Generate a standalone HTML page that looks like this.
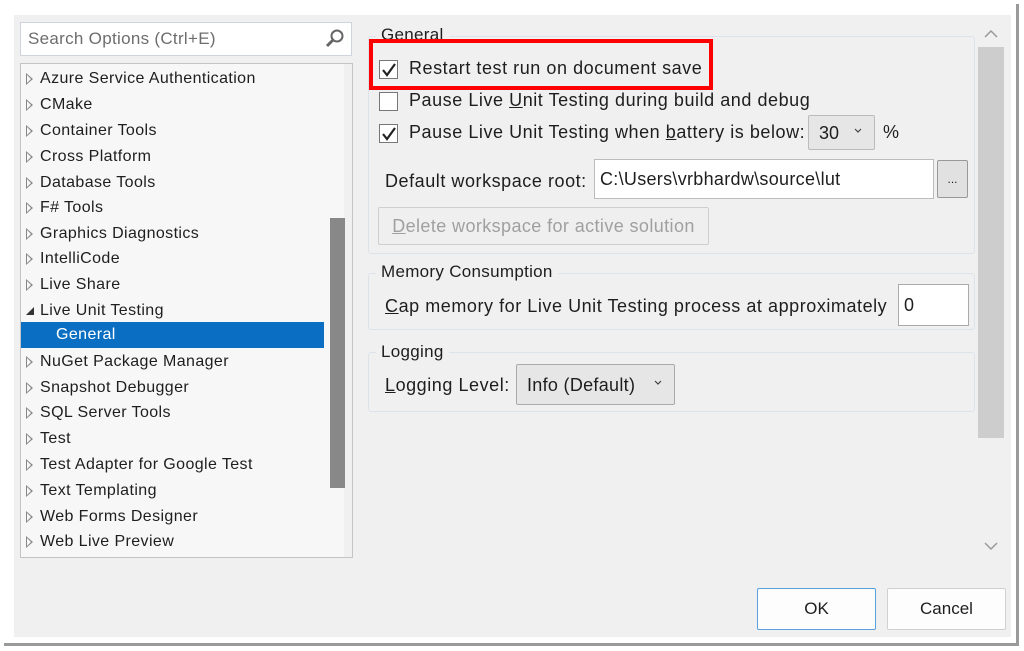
<!DOCTYPE html>
<html><head><meta charset="utf-8"><style>
*{box-sizing:border-box;margin:0;padding:0}
body{width:1024px;height:651px;background:#fff;position:relative;overflow:hidden;font-family:"Liberation Sans",sans-serif;color:#1e1e1e;font-size:16px}
.a{position:absolute}
.bg{left:14px;top:15px;width:997px;height:622px;background:#f0f0f0}
.shr{left:1016px;top:4px;width:3px;height:642px;background:#9a9a9a}
.shb{left:4px;top:643px;width:1015px;height:3px;background:#9a9a9a}
.search{left:20px;top:22px;width:332px;height:34px;background:#fff;border:1px solid #cfd3dc;color:#6d6d6d;font-size:17px;letter-spacing:.3px;padding:6px 0 0 7px}
.tree{left:20px;top:63px;width:333px;height:495px;background:#f7f7f7;border:1px solid #c4c4c8}
.it{position:absolute;left:19px;font-size:16px;letter-spacing:.4px;white-space:nowrap;height:26px;line-height:26px}
.tri{position:absolute;width:0;height:0;border-top:6px solid transparent;border-bottom:6px solid transparent;border-left:7px solid #888;top:7px}
.tri:after{content:"";position:absolute;left:-6px;top:-4px;border-top:4px solid transparent;border-bottom:4px solid transparent;border-left:4px solid #f7f7f7}
.sel{position:absolute;left:0;top:258px;width:303px;height:26px;background:#0a6fc2;color:#fff;padding-left:35px;line-height:26px;letter-spacing:.4px}
.thumb{left:330px;top:218px;width:15px;height:270px;background:#888}
.grp{border:1px solid #dde3ea;border-radius:3px;background:#f0f0f0}
.lg{position:absolute;background:#f0f0f0;padding:0 5px;font-size:17px;letter-spacing:.3px;line-height:18px}
.cb{position:absolute;width:19px;height:19px;border:1px solid #777;background:#fff}
.cb svg{position:absolute;left:1px;top:1px}
.lbl{position:absolute;font-size:18px;letter-spacing:.55px;white-space:nowrap}
.btn{position:absolute;background:#fdfdfd;border:1px solid #ccc;border-radius:2px;text-align:center;font-size:17px}
</style></head><body>
<div class="a bg"></div>
<div class="a shr"></div><div class="a shb"></div>
<div class="a search">Search Options (Ctrl+E)
<svg class="a" style="left:304px;top:6px" width="20" height="20" viewBox="0 0 20 20"><circle cx="12" cy="7" r="5.5" fill="none" stroke="#666" stroke-width="2"/><path d="M8 11L2 17" stroke="#666" stroke-width="3"/></svg></div>
<div class="a tree">
<div class="it" style="top:2px"><span class="tri" style="left:-14px"></span>Azure Service Authentication</div>
<div class="it" style="top:28px"><span class="tri" style="left:-14px"></span>CMake</div>
<div class="it" style="top:54px"><span class="tri" style="left:-14px"></span>Container Tools</div>
<div class="it" style="top:80px"><span class="tri" style="left:-14px"></span>Cross Platform</div>
<div class="it" style="top:106px"><span class="tri" style="left:-14px"></span>Database Tools</div>
<div class="it" style="top:131px"><span class="tri" style="left:-14px"></span>F# Tools</div>
<div class="it" style="top:157px"><span class="tri" style="left:-14px"></span>Graphics Diagnostics</div>
<div class="it" style="top:182px"><span class="tri" style="left:-14px"></span>IntelliCode</div>
<div class="it" style="top:208px"><span class="tri" style="left:-14px"></span>Live Share</div>
<div class="it" style="top:234px"><svg class="a" style="left:-14px;top:9px" width="9" height="9"><path d="M8 0L8 8L0 8Z" fill="#333"/></svg>Live Unit Testing</div>
<div class="sel">General</div>
<div class="it" style="top:285px"><span class="tri" style="left:-14px"></span>NuGet Package Manager</div>
<div class="it" style="top:311px"><span class="tri" style="left:-14px"></span>Snapshot Debugger</div>
<div class="it" style="top:336px"><span class="tri" style="left:-14px"></span>SQL Server Tools</div>
<div class="it" style="top:362px"><span class="tri" style="left:-14px"></span>Test</div>
<div class="it" style="top:388px"><span class="tri" style="left:-14px"></span>Test Adapter for Google Test</div>
<div class="it" style="top:414px"><span class="tri" style="left:-14px"></span>Text Templating</div>
<div class="it" style="top:440px"><span class="tri" style="left:-14px"></span>Web Forms Designer</div>
<div class="it" style="top:465px"><span class="tri" style="left:-14px"></span>Web Live Preview</div>
</div>
<div class="a" style="left:344px;top:64px;width:8px;height:493px;background:#f0f0f0"></div>
<div class="a thumb"></div>

<div class="a" style="left:978px;top:47px;width:26px;height:391px;background:#cdcdcd"></div>
<svg class="a" style="left:984px;top:29px" width="14" height="10"><path d="M1 8L7 2L13 8" fill="none" stroke="#999" stroke-width="1.5"/></svg>
<svg class="a" style="left:984px;top:541px" width="14" height="10"><path d="M1 2L7 8L13 2" fill="none" stroke="#999" stroke-width="1.5"/></svg>

<div class="a grp" style="left:368px;top:36px;width:607px;height:218px"></div>
<div class="lg" style="left:376px;top:26px">General</div>
<div class="cb" style="left:379px;top:60px"><svg width="16" height="16"><path d="M2 8L6 13L14 2" fill="none" stroke="#222" stroke-width="2.2"/></svg></div>
<div class="lbl" style="left:409px;top:58px">Restart test run on document save</div>
<div class="cb" style="left:379px;top:92px"></div>
<div class="lbl" style="left:409px;top:90px">Pause Live <u>U</u>nit Testing during build and debug</div>
<div class="cb" style="left:379px;top:124px"><svg width="16" height="16"><path d="M2 8L6 13L14 2" fill="none" stroke="#222" stroke-width="2.2"/></svg></div>
<div class="lbl" style="left:409px;top:122px">Pause Live Unit Testing when <u>b</u>attery is below:</div>
<div class="btn" style="left:808px;top:115px;width:67px;height:35px;background:#e6e6e6;border-color:#bbb;text-align:left;padding:7px 0 0 10px;font-size:18px">30<svg class="a" style="left:45px;top:12px" width="8" height="6"><path d="M1 1L4 4L7 1" fill="none" stroke="#444" stroke-width="1.2"/></svg></div>
<div class="lbl" style="left:883px;top:122px">%</div>
<div class="lbl" style="left:385px;top:171px">Default workspace root:</div>
<div class="a" style="left:594px;top:159px;width:340px;height:40px;background:#fff;border:1px solid #bbb;font-size:18px;letter-spacing:.3px;padding:9px 0 0 5px">C:\Users\vrbhardw\source\lut</div>
<div class="btn" style="left:937px;top:160px;width:31px;height:38px;background:#e1e1e1;border-color:#999;font-size:12px;line-height:36px">...</div>
<div class="btn" style="left:378px;top:207px;width:331px;height:38px;color:#a0a0a0;background:#efefef;border-color:#cfcfcf;font-size:18px;letter-spacing:.4px;line-height:36px"><u>D</u>elete workspace for active solution</div>

<div class="a grp" style="left:368px;top:273px;width:607px;height:57px"></div>
<div class="lg" style="left:376px;top:263px">Memory Consumption</div>
<div class="lbl" style="left:385px;top:296px"><u>C</u>ap memory for Live Unit Testing process at approximately</div>
<div class="a" style="left:898px;top:284px;width:71px;height:42px;background:#fff;border:1px solid #aaa;font-size:18px;padding:10px 0 0 5px">0</div>

<div class="a grp" style="left:368px;top:352px;width:607px;height:60px"></div>
<div class="lg" style="left:376px;top:343px">Logging</div>
<div class="lbl" style="left:385px;top:375px"><u>L</u>ogging Level:</div>
<div class="btn" style="left:516px;top:364px;width:159px;height:41px;background:#e6e6e6;border-color:#aaa;text-align:left;padding:10px 0 0 10px;font-size:18px;letter-spacing:.3px">Info (Default)<svg class="a" style="left:137px;top:15px" width="8" height="6"><path d="M1 1L4 4L7 1" fill="none" stroke="#444" stroke-width="1.2"/></svg></div>

<div class="a" style="left:369px;top:39px;width:344px;height:51px;border:4px solid #ff0000"></div>

<div class="btn" style="left:757px;top:588px;width:119px;height:42px;border-color:#5aa0dd;line-height:40px;background:#fdfdfd">OK</div>
<div class="btn" style="left:887px;top:588px;width:119px;height:42px;line-height:40px;border-color:#d0d0d0">Cancel</div>
</body></html>
